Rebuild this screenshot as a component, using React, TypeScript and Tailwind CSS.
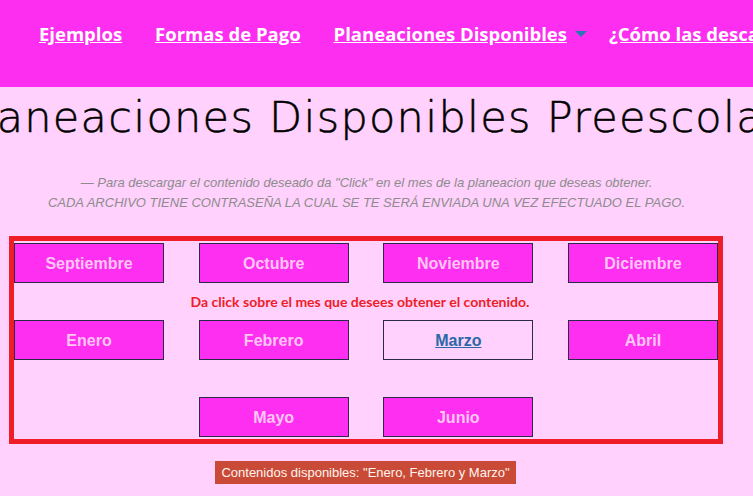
const months = [
  { name: 'Septiembre', col: 'col-start-1' },
  { name: 'Octubre', col: 'col-start-2' },
  { name: 'Noviembre', col: 'col-start-3' },
  { name: 'Diciembre', col: 'col-start-4' },
]

const monthsRow2 = ['Enero', 'Febrero', 'Marzo', 'Abril']

function MonthButton({ name }: { name: string }) {
  const active = name === 'Marzo'
  return (
    <a
      href="#"
      className={
        active
          ? 'flex h-[40px] w-[150px] items-center justify-center border border-[#2b2a48] bg-[#ffd1fc] pt-[2px] text-[16px] font-bold text-[#2869a6] underline'
          : 'flex h-[40px] w-[150px] items-center justify-center border border-[#2b2a48] bg-[#fe2ff0] pt-[2px] text-[16px] font-bold text-[#ffc6f6]'
      }
    >
      {name}
    </a>
  )
}

export default function App() {
  return (
    <div className="h-[496px] w-[753px] overflow-hidden bg-[#ffd1fc] font-['Liberation_Sans',Arial,sans-serif]">
      {/* Header / nav */}
      <header className="h-[87px] bg-[#fe2ef0]">
        <nav className="flex items-center whitespace-nowrap pl-[39px] pt-[21px] font-['Open_Sans',sans-serif] text-[18.5px] font-bold leading-[26px] text-white">
          <a href="#" className="underline">Ejemplos</a>
          <a href="#" className="ml-[33px] underline">Formas de Pago</a>
          <a href="#" className="ml-[33px] underline">Planeaciones Disponibles</a>
          <span className="ml-[8px] h-0 w-0 border-x-[6px] border-t-[6px] border-x-transparent border-t-[#2778b5]" />
          <a href="#" className="ml-[22px] underline">¿Cómo las descargo?</a>
        </nav>
      </header>

      {/* Title */}
      <h1 className="mt-[9px] flex justify-center whitespace-nowrap pr-[14px] font-['DejaVu_Sans',sans-serif] text-[43px] font-extralight leading-[42px] tracking-[1.3px] text-black [-webkit-text-stroke:0.5px_black]">
        Planeaciones Disponibles Preescolar
      </h1>

      <div className="mt-[35px] pr-[20px] text-center text-[13px] italic leading-[20px] text-[#8c8c8c]">
        <p>— Para descargar el contenido deseado da "Click" en el mes de la planeacion que deseas obtener.</p>
        <p>CADA ARCHIVO TIENE CONTRASEÑA LA CUAL SE TE SERÁ ENVIADA UNA VEZ EFECTUADO EL PAGO.</p>
      </div>

      {/* Months box */}
      <section className="ml-[9px] mt-[23px] w-[714px] border-[5px] border-[#ee1d27] py-[2px]">
        <div className="grid grid-cols-[repeat(4,150px)] justify-between">
          {months.map((m) => (
            <div key={m.name} className={m.col}>
              <MonthButton name={m.name} />
            </div>
          ))}
        </div>
        <p className="flex h-[37px] items-center justify-center pr-[12px] font-['Lato',sans-serif] text-[14px] font-bold text-[#ee1d27]">
          Da click sobre el mes que desees obtener el contenido.
        </p>
        <div className="grid grid-cols-[repeat(4,150px)] justify-between">
          {monthsRow2.map((name) => (
            <MonthButton key={name} name={name} />
          ))}
        </div>
        <div className="mt-[37px] grid grid-cols-[repeat(4,150px)] justify-between">
          <div className="col-start-2">
            <MonthButton name="Mayo" />
          </div>
          <div className="col-start-3">
            <MonthButton name="Junio" />
          </div>
        </div>
      </section>

      <div className="mt-[17px] flex justify-center pr-[22px]">
        <span className="inline-block h-[23px] bg-[#c94b37] px-[6px] text-[13px] leading-[23px] text-[#fff4ee]">
          Contenidos disponibles: "Enero, Febrero y Marzo"
        </span>
      </div>
    </div>
  )
}
